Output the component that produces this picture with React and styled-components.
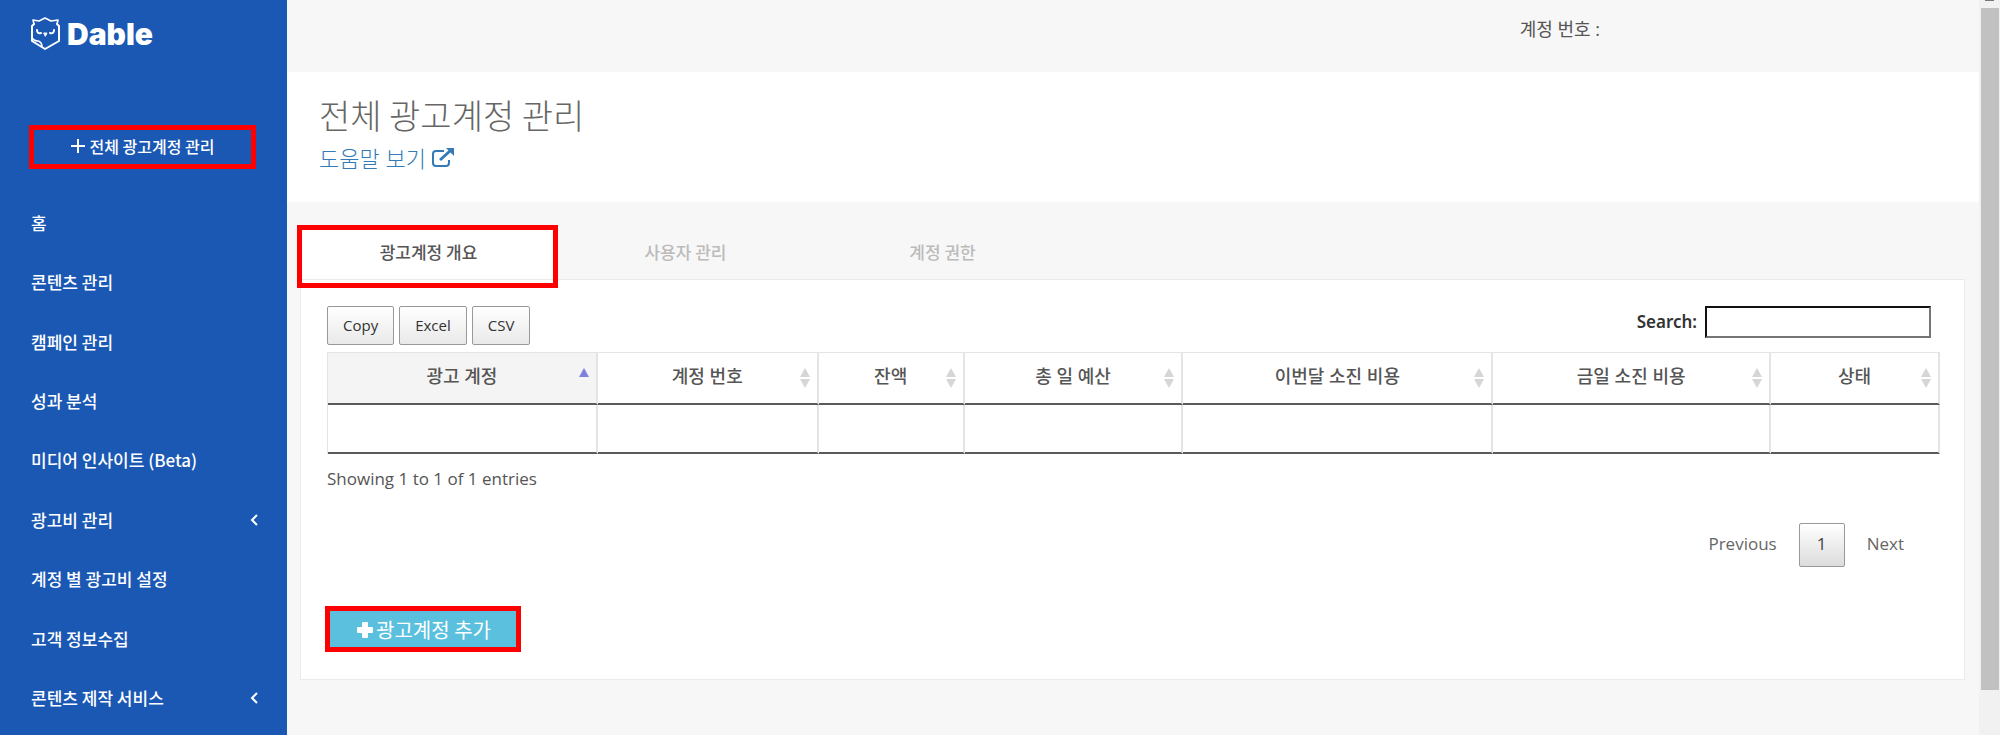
import React from "react";
import styled, { createGlobalStyle, css } from "styled-components";

const hangul = '"Noto Sans CJK KR", sans-serif';
const latin = '"Open Sans", "Noto Sans CJK KR", sans-serif';

const Global = createGlobalStyle`
  * { box-sizing: border-box; }
  html, body { margin: 0; padding: 0; }
  body {
    background: #f7f7f7;
    color: #555;
    font-family: ${latin};
    font-size: 17px;
    line-height: 24px;
    overflow: hidden;
  }
  button, input { font: inherit; }
`;

const Page = styled.div`
  display: flex;
  min-height: 100vh;
`;

const Sidebar = styled.aside`
  flex: none;
  width: 287px;
  display: flex;
  flex-direction: column;
  padding: 16px 29px 7px;
  background: #1a58b4;
  color: #fff;
  font-family: ${hangul};
`;

const Logo = styled.a`
  display: flex;
  align-items: center;
  gap: 6px;
  height: 36px;
  padding-left: 1px;
  color: #fff;
  font-family: Inter, sans-serif;
  font-size: 30px;
  font-weight: 900;
  line-height: 36px;
  text-decoration: none;
`;

const highlight = css`
  border: 5px solid #fe0000;
`;

const AccountsButton = styled.button`
  ${highlight}
  display: flex;
  align-items: center;
  justify-content: center;
  gap: 5px;
  height: 44px;
  margin: 73px 2px 24px 0;
  padding: 0 0 2px;
  background: transparent;
  color: #fff;
  font-size: 16px;
  font-weight: 500;
`;

const Nav = styled.nav`
  flex: 1;
  display: flex;
  flex-direction: column;
  padding-left: 2px;
`;

const NavLink = styled.a`
  flex: 1;
  display: flex;
  align-items: center;
  justify-content: space-between;
  min-height: 48px;
  color: #fff;
  font-size: 17px;
  font-weight: 500;
  text-decoration: none;
`;

const Main = styled.main`
  flex: 1;
  min-width: 0;
`;

const TopBar = styled.header`
  display: flex;
  justify-content: flex-end;
  height: 72px;
  padding: 17px 379px 0 0;
  font-family: ${latin};
  font-size: 18px;
`;

const PageHeader = styled.section`
  height: 130px;
  padding: 19px 32px;
  background: #fff;
  font-family: ${hangul};
`;

const Title = styled.h1`
  margin: 0;
  color: #666;
  font-size: 34px;
  font-weight: 300;
  line-height: 48px;
`;

const HelpLink = styled.a`
  display: inline-flex;
  align-items: center;
  gap: 6px;
  color: #337ab7;
  font-family: ${latin};
  font-size: 22px;
  font-weight: 300;
  line-height: 38px;
  text-decoration: none;
`;

const Content = styled.section`
  padding: 23px 14px 0 13px;
`;

const Tabs = styled.div`
  position: relative;
  display: flex;
  height: 54px;
`;

const Tab = styled.button`
  width: 257px;
  padding: 0;
  border: 0;
  background: ${(p) => (p.$active ? "#fff" : "transparent")};
  color: ${(p) => (p.$active ? "#555" : "#bbb")};
  font-family: ${hangul};
  font-size: 17px;
  font-weight: 500;
`;

const TabHighlight = styled.div`
  ${highlight}
  position: absolute;
  top: 0;
  left: -3px;
  width: 261px;
  height: 63px;
  pointer-events: none;
`;

const Panel = styled.div`
  padding: 26px 24px 27px 26px;
  border: 1px solid #ebebeb;
  background: #fff;
`;

const Toolbar = styled.div`
  display: flex;
  justify-content: space-between;
  align-items: flex-start;
  height: 46px;
`;

const Exports = styled.div`
  display: flex;
  gap: 5px;
`;

const ExportButton = styled.button`
  height: 39px;
  padding: 0 15px 1px;
  border: 1px solid #999;
  border-radius: 2px;
  background: linear-gradient(#fff, #e9e9e9);
  color: #333;
  font-size: 15px;
`;

const Search = styled.label`
  display: flex;
  align-items: center;
  gap: 8px;
  margin-right: 9px;
  color: #333;
  font-family: "Noto Sans", sans-serif;
  font-weight: 600;
`;

const SearchInput = styled.input`
  width: 226px;
  height: 32px;
  padding: 0 6px;
  border: 2px solid;
  border-color: #111 #767676 #767676 #111;
  background: #fff;
`;

const Table = styled.table`
  width: 100%;
  table-layout: fixed;
  border-spacing: 0;
  border-left: 1px solid #e4e4e4;
`;

const Th = styled.th`
  height: 53px;
  padding: 0 2px;
  border: solid #e4e4e4;
  border-width: 1px 2px 2px 0;
  border-bottom-color: #5a5a5a;
  background: ${(p) => (p.$sorted ? "#f4f4f4" : "#fff")};
  font-family: ${hangul};
  font-weight: 500;
`;

const SortButton = styled.button`
  display: grid;
  grid-template-columns: 16px 1fr 16px;
  align-items: center;
  width: 100%;
  padding: 0;
  border: 0;
  background: transparent;
  color: #555;
  font-family: ${latin};
  font-size: 18px;
  font-weight: 500;
`;

const SortLabel = styled.span`
  grid-column: 2;
  padding-bottom: 4px;
`;

const Td = styled.td`
  height: 49px;
  border: solid #e4e4e4;
  border-width: 0 2px 2px 0;
  border-bottom-color: #5a5a5a;
`;

const Info = styled.p`
  margin: 13px 0 0;
`;

const Pager = styled.nav`
  display: flex;
  justify-content: flex-end;
  align-items: center;
  gap: 22px;
  margin: 32px 36px 39px 0;
`;

const PagerButton = styled.button`
  height: 44px;
  padding: 0 0 2px;
  border: 0;
  background: transparent;
  color: #666;
`;

const CurrentPage = styled(PagerButton)`
  width: 46px;
  border: 1px solid #999;
  border-radius: 2px;
  background: linear-gradient(#fff, #dcdcdc);
  color: #444;
`;

const AddButton = styled.button`
  ${highlight}
  display: flex;
  align-items: center;
  justify-content: center;
  gap: 3px;
  width: 196px;
  height: 46px;
  margin-left: -2px;
  padding: 2px 0 0 2px;
  background: #5bc0de;
  color: #fff;
  font-family: ${hangul};
  font-size: 20px;
`;

const ScrollTrack = styled.div`
  flex: none;
  display: flex;
  flex-direction: column;
  align-items: center;
  width: 21px;
  height: 100vh;
  background: #f1f1f1;
`;

const ScrollArrow = styled.div`
  width: 9px;
  height: 1px;
  margin-bottom: 7px;
  background: #777;
`;

const ScrollThumb = styled.div`
  flex: 1;
  width: 18px;
  margin-bottom: 45px;
  background: #c1c1c1;
`;

const Owl = () => (
  <svg width="31" height="34" viewBox="0 0 31 34" fill="none" stroke="#fff" strokeWidth="2" strokeLinejoin="round" strokeLinecap="round" aria-hidden="true">
    <path d="M4 7 L2 9 V24 L15 32 L29 24 V9 L27 7" />
    <path d="M4 7 L3 3 L9 4 L15 1 L21 4 L28 3 L27 7" strokeWidth="1.6" />
    <path d="M2 21 Q4 24 8 24 Q12 25 12 30" strokeWidth="1.6" />
    <path d="M7 13 Q7 17 11 16 M24 13 Q24 17 20 16" />
    <path d="M14 16 H17 L15.500 19 Z" fill="#fff" strokeWidth="1" />
  </svg>
);

const Chevron = () => (
  <svg width="8" height="12" viewBox="0 0 8 12" fill="none" stroke="#fff" strokeWidth="2" aria-hidden="true">
    <path d="M7 1 L2 6 L7 11" />
  </svg>
);

const SortIcon = ({ sorted }) => (
  <svg width="12" height="22" viewBox="0 0 12 22" aria-hidden="true">
    <path d="M6 1 L11 10 H1 Z" fill={sorted ? "#8080dd" : "#d6d6d6"} />
    {!sorted && <path d="M6 21 L11 12 H1 Z" fill="#d6d6d6" />}
  </svg>
);

const menu = [
  ["홈"],
  ["콘텐츠 관리"],
  ["캠페인 관리"],
  ["성과 분석"],
  ["미디어 인사이트 (Beta)"],
  ["광고비 관리", true],
  ["계정 별 광고비 설정"],
  ["고객 정보수집"],
  ["콘텐츠 제작 서비스", true],
];

const columns = [
  ["광고 계정", 270],
  ["계정 번호", 221],
  ["잔액", 146],
  ["총 일 예산", 219],
  ["이번달 소진 비용", 310],
  ["금일 소진 비용", 278],
  ["상태", 169],
];
const total = columns.reduce((sum, c) => sum + c[1], 0);

export default function App() {
  return (
    <>
      <Global />
      <Page>
        <Sidebar>
          <Logo href="#"><Owl />Dable</Logo>
          <AccountsButton type="button">
            <svg width="14" height="14" viewBox="0 0 14 14" stroke="#fff" strokeWidth="2" aria-hidden="true">
              <path d="M7 0 V14 M0 7 H14" />
            </svg>
            전체 광고계정 관리
          </AccountsButton>
          <Nav>
            {menu.map(([label, nested]) => (
              <NavLink href="#" key={label}>{label}{nested && <Chevron />}</NavLink>
            ))}
          </Nav>
        </Sidebar>
        <Main>
          <TopBar>계정 번호 :</TopBar>
          <PageHeader>
            <Title>전체 광고계정 관리</Title>
            <HelpLink href="#">
              도움말 보기
              <svg width="22" height="20" viewBox="0 0 22 20" fill="none" stroke="#337ab7" strokeWidth="2" aria-hidden="true">
                <path d="M12 3 H4 Q1 3 1 6 V15 Q1 18 4 18 H14 Q17 18 17 15 V12" />
                <path d="M8 12 L18 3" strokeWidth="3" />
                <path d="M14 0 H22 V8 Z" fill="#337ab7" stroke="none" />
              </svg>
            </HelpLink>
          </PageHeader>
          <Content>
            <Tabs role="tablist">
              <Tab role="tab" aria-selected="true" $active>광고계정 개요</Tab>
              <Tab role="tab" aria-selected="false">사용자 관리</Tab>
              <Tab role="tab" aria-selected="false">계정 권한</Tab>
              <TabHighlight />
            </Tabs>
            <Panel>
              <Toolbar>
                <Exports>
                  <ExportButton type="button">Copy</ExportButton>
                  <ExportButton type="button">Excel</ExportButton>
                  <ExportButton type="button">CSV</ExportButton>
                </Exports>
                <Search>Search:<SearchInput type="search" /></Search>
              </Toolbar>
              <Table>
                <colgroup>
                  {columns.map(([label, w]) => (
                    <col key={label} style={{ width: `${(w / total) * 100}%` }} />
                  ))}
                </colgroup>
                <thead>
                  <tr>
                    {columns.map(([label], i) => (
                      <Th key={label} $sorted={i === 0}>
                        <SortButton type="button">
                          <SortLabel>{label}</SortLabel>
                          <SortIcon sorted={i === 0} />
                        </SortButton>
                      </Th>
                    ))}
                  </tr>
                </thead>
                <tbody>
                  <tr>{columns.map(([label]) => <Td key={label} />)}</tr>
                </tbody>
              </Table>
              <Info>Showing 1 to 1 of 1 entries</Info>
              <Pager aria-label="Pagination">
                <PagerButton type="button">Previous</PagerButton>
                <CurrentPage type="button">1</CurrentPage>
                <PagerButton type="button">Next</PagerButton>
              </Pager>
              <AddButton type="button">
                <svg width="16" height="16" viewBox="0 0 16 16" fill="#fff" aria-hidden="true">
                  <path d="M6 0 h4 q1 0 1 1 v4 h4 q1 0 1 1 v4 q0 1 -1 1 h-4 v4 q0 1 -1 1 h-4 q-1 0 -1 -1 v-4 h-4 q-1 0 -1 -1 v-4 q0 -1 1 -1 h4 v-4 q0 -1 1 -1 Z" />
                </svg>
                광고계정 추가
              </AddButton>
            </Panel>
          </Content>
        </Main>
        <ScrollTrack>
          <ScrollArrow />
          <ScrollThumb />
        </ScrollTrack>
      </Page>
    </>
  );
}
